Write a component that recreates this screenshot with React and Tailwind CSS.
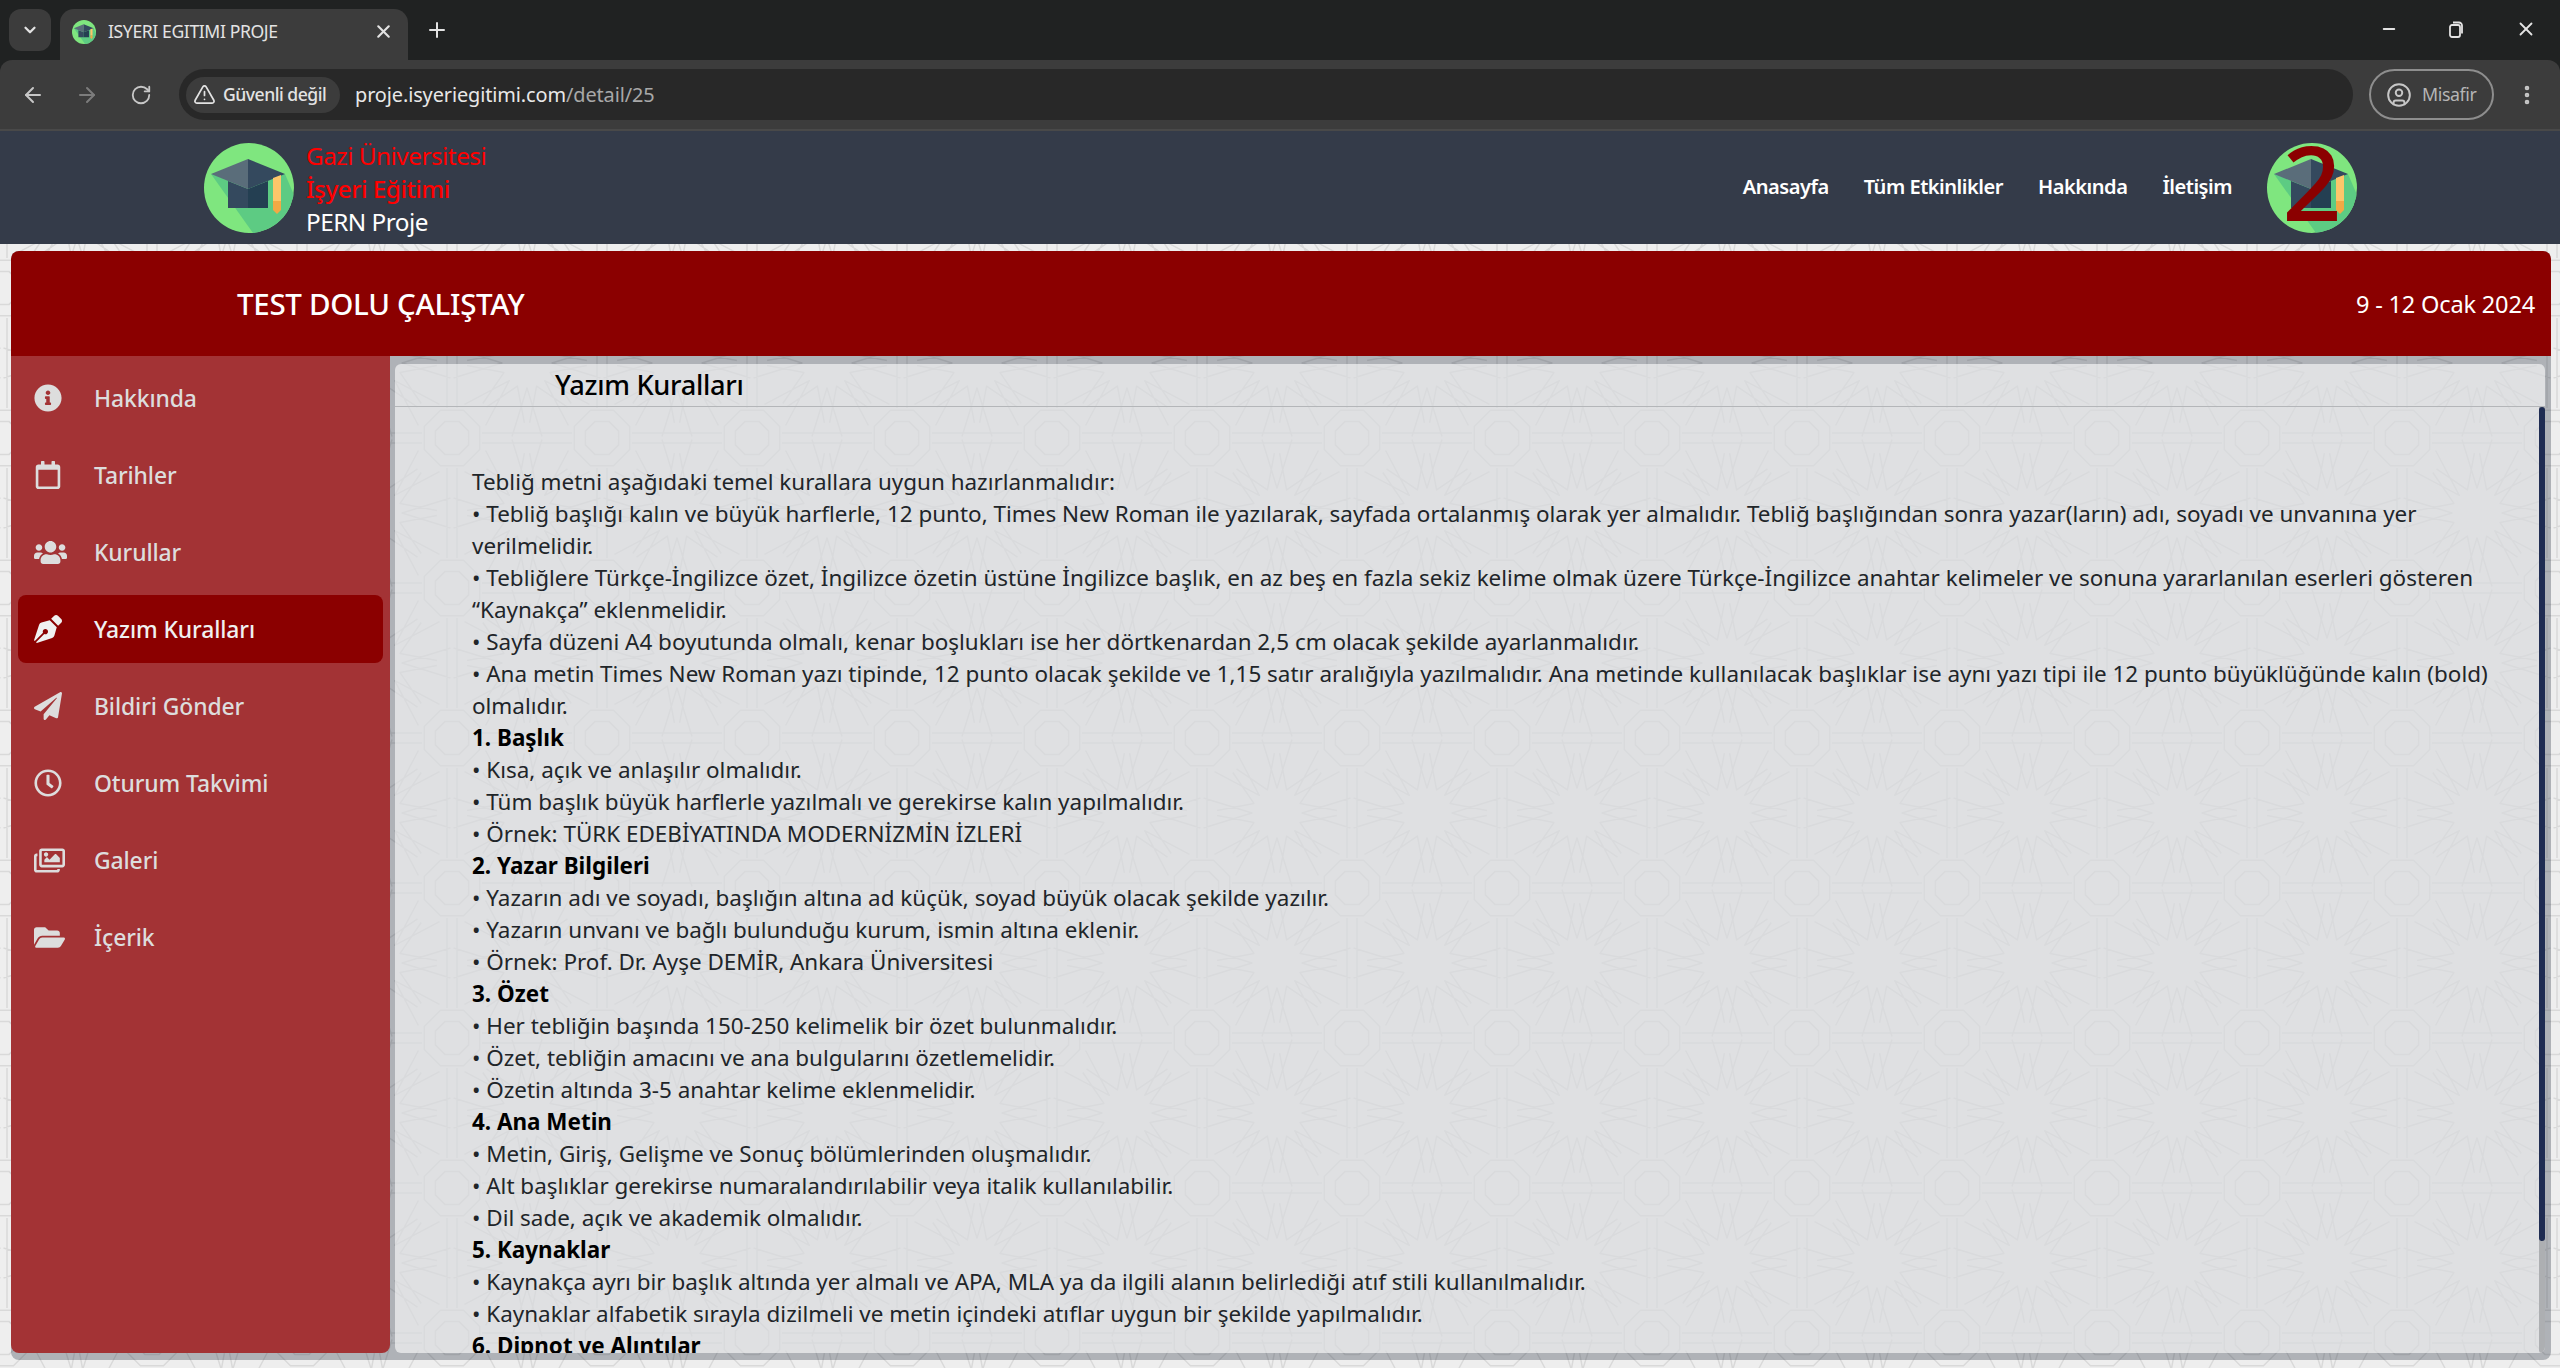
import React from 'react';
import { ArrowLeft, ArrowRight, RotateCw, TriangleAlert, CircleUser, X, Plus, Minus, ChevronDown, EllipsisVertical } from 'lucide-react';
import { FaInfoCircle, FaRegCalendar, FaUsers, FaPenNib, FaPaperPlane, FaRegClock, FaRegImages, FaFolderOpen } from 'react-icons/fa';

function polar(cx, cy, r, deg) {
  const a = (deg * Math.PI) / 180;
  return `${(cx + r * Math.cos(a)).toFixed(1)} ${(cy + r * Math.sin(a)).toFixed(1)}`;
}

function rosette(cx, cy) {
  let d = '';
  for (let k = 0; k < 16; k++) {
    const a = k * 22.5;
    const axis = k % 2 === 0;
    const r0 = 25;
    const r1 = axis ? 75 : 60;
    const da = axis ? 11.5 : 20;
    d += `M${polar(cx, cy, r1, a - da)} L${polar(cx, cy, r0, a)} L${polar(cx, cy, r1, a + da)} `;
  }
  return d;
}

function octagon(cx, cy, r) {
  let d = '';
  for (let k = 0; k < 8; k++) d += `${k === 0 ? 'M' : 'L'}${polar(cx, cy, r, 22.5 + k * 45)} `;
  return d + 'Z ';
}

const tilePath =
  rosette(0, 0) + rosette(150, 0) + rosette(0, 150) + rosette(150, 150) +
  octagon(75, 75, 18) + octagon(75, 75, 30) +
  'M0 70H45M0 80H45M105 70H150M105 80H150M70 0V45M80 0V45M70 105V150M80 105V150';

function Pattern() {
  return (
    <svg className="absolute inset-0 w-full h-full" aria-hidden="true">
      <defs>
        <pattern id="geo" width="150" height="150" patternUnits="userSpaceOnUse" patternTransform="translate(77 63)">
          <path d={tilePath} fill="none" stroke="#d9d9d9" strokeWidth="1.5" strokeLinejoin="round" />
        </pattern>
      </defs>
      <rect width="100%" height="100%" fill="url(#geo)" />
    </svg>
  );
}

function Logo({ id, className }) {
  return (
    <svg viewBox="0 0 90 90" className={className}>
      <defs>
        <clipPath id={id}>
          <circle cx="45" cy="45" r="45" />
        </clipPath>
      </defs>
      <circle cx="45" cy="45" r="45" fill="#7fe67f" />
      <g clipPath={`url(#${id})`}>
        <polygon points="7,31 49,90 90,90 90,52 81,31" fill="#5dcb83" />
      </g>
      <polygon points="24,38 44,46 44,65 24,65" fill="#34495e" />
      <polygon points="44,46 64,38 64,65 44,65" fill="#243f52" />
      <polygon points="7,31 44,16 44,46" fill="#5a6d7a" />
      <polygon points="44,16 81,31 44,46" fill="#34495e" />
      <polygon points="69,35 77,32 77,58 69,58" fill="#fdc66a" />
      <polygon points="69,58 77,58 77,67 73,71 69,67" fill="#f2a945" />
    </svg>
  );
}

const lines = [
  ['Tebliğ metni aşağıdaki temel kurallara uygun hazırlanmalıdır:'],
  ['• Tebliğ başlığı kalın ve büyük harflerle, 12 punto, Times New Roman ile yazılarak, sayfada ortalanmış olarak yer almalıdır. Tebliğ başlığından sonra yazar(ların) adı, soyadı ve unvanına yer'],
  ['verilmelidir.'],
  ['• Tebliğlere Türkçe-İngilizce özet, İngilizce özetin üstüne İngilizce başlık, en az beş en fazla sekiz kelime olmak üzere Türkçe-İngilizce anahtar kelimeler ve sonuna yararlanılan eserleri gösteren'],
  ['“Kaynakça” eklenmelidir.'],
  ['• Sayfa düzeni A4 boyutunda olmalı, kenar boşlukları ise her dörtkenardan 2,5 cm olacak şekilde ayarlanmalıdır.'],
  ['• Ana metin Times New Roman yazı tipinde, 12 punto olacak şekilde ve 1,15 satır aralığıyla yazılmalıdır. Ana metinde kullanılacak başlıklar ise aynı yazı tipi ile 12 punto büyüklüğünde kalın (bold)'],
  ['olmalıdır.'],
  ['1. Başlık', true],
  ['• Kısa, açık ve anlaşılır olmalıdır.'],
  ['• Tüm başlık büyük harflerle yazılmalı ve gerekirse kalın yapılmalıdır.'],
  ['• Örnek: TÜRK EDEBİYATINDA MODERNİZMİN İZLERİ'],
  ['2. Yazar Bilgileri', true],
  ['• Yazarın adı ve soyadı, başlığın altına ad küçük, soyad büyük olacak şekilde yazılır.'],
  ['• Yazarın unvanı ve bağlı bulunduğu kurum, ismin altına eklenir.'],
  ['• Örnek: Prof. Dr. Ayşe DEMİR, Ankara Üniversitesi'],
  ['3. Özet', true],
  ['• Her tebliğin başında 150-250 kelimelik bir özet bulunmalıdır.'],
  ['• Özet, tebliğin amacını ve ana bulgularını özetlemelidir.'],
  ['• Özetin altında 3-5 anahtar kelime eklenmelidir.'],
  ['4. Ana Metin', true],
  ['• Metin, Giriş, Gelişme ve Sonuç bölümlerinden oluşmalıdır.'],
  ['• Alt başlıklar gerekirse numaralandırılabilir veya italik kullanılabilir.'],
  ['• Dil sade, açık ve akademik olmalıdır.'],
  ['5. Kaynaklar', true],
  ['• Kaynakça ayrı bir başlık altında yer almalı ve APA, MLA ya da ilgili alanın belirlediği atıf stili kullanılmalıdır.'],
  ['• Kaynaklar alfabetik sırayla dizilmeli ve metin içindeki atıflar uygun bir şekilde yapılmalıdır.'],
  ['6. Dipnot ve Alıntılar', true],
];

const menu = [
  ['Hakkında', FaInfoCircle, 28],
  ['Tarihler', FaRegCalendar, 28],
  ['Kurullar', FaUsers, 33],
  ['Yazım Kuralları', FaPenNib, 28, true],
  ['Bildiri Gönder', FaPaperPlane, 28],
  ['Oturum Takvimi', FaRegClock, 28],
  ['Galeri', FaRegImages, 31],
  ['İçerik', FaFolderOpen, 31],
];

export default function App() {
  return (
    <div className="relative w-full h-[1368px] overflow-hidden bg-[#eeeeee] font-['Noto_Sans',sans-serif] flex flex-col">
      <Pattern />

      {/* tab strip */}
      <div className="relative h-[60px] shrink-0 bg-[#202222] flex items-end pl-[9px] text-[#e3e3e3]">
        <div className="w-[42px] h-[42px] mb-[9px] rounded-[12px] bg-[#3c3c3c] flex items-center justify-center">
          <ChevronDown size={18} strokeWidth={3} />
        </div>
        <div className="ml-[9px] w-[348px] h-[51px] rounded-t-[14px] bg-[#3c3c3c] flex items-center pl-[12px] pr-[14px] pb-[6px]">
          <Logo id="fav" className="w-[24px] h-[24px] shrink-0" />
          <span className="ml-[12px] text-[17.6px] tracking-[-0.4px] whitespace-nowrap">ISYERI EGITIMI PROJE</span>
          <X size={21} strokeWidth={2.4} className="ml-auto" />
        </div>
        <Plus size={24} strokeWidth={2} className="ml-[17px] mb-[18px]" />
        <div className="ml-auto flex items-center h-[60px] pb-[3px] pr-[23px] gap-[50px]">
          <Minus size={18} strokeWidth={2.6} />
          <svg width="17" height="18" viewBox="0 0 17 18" fill="none" stroke="#e3e3e3" strokeWidth="1.8">
            <rect x="2" y="5" width="10" height="12" rx="2" />
            <path d="M5 2.5h6a3 3 0 0 1 3 3v8" />
          </svg>
          <X size={22} strokeWidth={2} />
        </div>
      </div>

      {/* toolbar */}
      <div className="relative h-[71px] shrink-0 bg-[#202222]">
        <div className="h-full rounded-t-[12px] bg-[#3c3c3c] border-b-[2px] border-[#494949] flex items-center text-[#c7c7c7]">
          <ArrowLeft size={24} strokeWidth={2} className="ml-[21px]" />
          <ArrowRight size={24} strokeWidth={2} className="ml-[30px] text-[#7c7c7c]" />
          <RotateCw size={22} strokeWidth={2} className="ml-[31px]" />
          <div className="ml-[27px] w-[2174px] h-[51px] rounded-full bg-[#282828] flex items-center pl-[7px]">
            <div className="h-[36px] w-[154px] rounded-full bg-[#3c3c3c] flex items-center pl-[7px] text-[#e3e3e3]">
              <TriangleAlert size={23} strokeWidth={1.8} />
              <span className="ml-[7px] text-[17.6px] font-medium tracking-[-0.5px] whitespace-nowrap">Güvenli değil</span>
            </div>
            <span className="ml-[15px] text-[19.9px] tracking-[-0.1px] whitespace-nowrap text-[#e8e8e8]">
              proje.isyeriegitimi.com<span className="text-[#a8a8a8]">/detail/25</span>
            </span>
          </div>
          <div className="ml-[16px] w-[125px] h-[51px] rounded-full border-[2px] border-[#8e8e8e] flex items-center pl-[15px]">
            <CircleUser size={26} strokeWidth={1.8} />
            <span className="ml-[10px] text-[17.8px] tracking-[-0.4px] text-[#b5b5b5]">Misafir</span>
          </div>
          <EllipsisVertical size={24} strokeWidth={2.6} className="ml-[21px]" />
        </div>
      </div>

      {/* site header */}
      <header className="relative h-[113px] shrink-0 bg-[#343b49] flex items-center pl-[204px] pr-[203px]">
        <Logo id="brand" className="w-[90px] h-[90px] shrink-0" />
        <div className="ml-[12px] pt-[2px] text-[24.3px] leading-[33px] tracking-[-0.5px] whitespace-nowrap">
          <div className="text-[#ff0000]">Gazi Üniversitesi</div>
          <div className="text-[#ff0000] font-medium">İşyeri Eğitimi</div>
          <div className="text-white">PERN Proje</div>
        </div>
        <nav className="ml-auto flex items-center gap-[35px] text-[20.1px] font-semibold tracking-[-0.5px] text-white whitespace-nowrap">
          <span>Anasayfa</span>
          <span>Tüm Etkinlikler</span>
          <span>Hakkında</span>
          <span>İletişim</span>
        </nav>
        <div className="relative ml-[35px] w-[90px] h-[90px] shrink-0">
          <Logo id="brand2" className="w-[90px] h-[90px]" />
          <span className="absolute inset-0 pb-[14px] flex items-center justify-center text-[104px] leading-none font-medium text-[#8b0000]">2</span>
        </div>
      </header>

      {/* event area */}
      <main className="relative mt-[7px] ml-[11px] mr-[9px] h-[1109px] shrink-0 rounded-[8px] bg-[#1f2937]/30 flex flex-col">
        <div className="h-[105px] shrink-0 rounded-t-[8px] bg-[#8b0000] flex items-center justify-between pl-[226px] pr-[16px] pt-[2px] text-white">
          <h1 className="text-[29.5px] font-medium tracking-[-0.3px]">TEST DOLU ÇALIŞTAY</h1>
          <div className="text-[23.6px] tracking-[-0.2px]">9 - 12 Ocak 2024</div>
        </div>
        <div className="flex-1 min-h-0 flex">
          <aside className="w-[379px] shrink-0 mb-[7px] rounded-b-[8px] bg-[#a33335] pt-[8px] px-[7px] flex flex-col gap-[9px]">
            {menu.map(([label, Icon, size, active]) => (
              <div
                key={label}
                className={active
                  ? 'h-[68px] shrink-0 rounded-[8px] bg-[#8b0000] flex items-center pl-[16px] text-[#f0f0f0]'
                  : 'h-[68px] shrink-0 rounded-[8px] flex items-center pl-[16px] text-[#dddddd]'}
              >
                <span className="w-[60px] shrink-0 flex">
                  <Icon size={size} />
                </span>
                <span className="pt-[2px] text-[22.9px] font-medium tracking-[-0.1px] whitespace-nowrap">{label}</span>
              </div>
            ))}
          </aside>
          <section className="relative flex-1 min-w-0 ml-[5px] mt-[8px] mb-[7px] mr-[6px] rounded-[6px] bg-white/60 overflow-hidden flex flex-col">
            <div className="h-[43px] shrink-0 border-b border-[#b4b6b9] pl-[160px] flex items-center">
              <h2 className="text-[27.2px] font-medium tracking-[-0.3px] text-black">Yazım Kuralları</h2>
            </div>
            <div className="relative flex-1 min-h-0 overflow-hidden pl-[77px] pt-[59px] text-[22.45px] leading-[32px] text-[#212529] whitespace-nowrap">
              {lines.map(([text, bold], i) => (
                <div key={i} className={bold ? 'font-bold text-black' : ''}>{text}</div>
              ))}
              <div className="absolute right-0 top-0 bottom-0 w-[6px] rounded-b-[3px] bg-[#adafb2]">
                <div className="h-[834px] rounded-full bg-[#1f2c52]" />
              </div>
            </div>
          </section>
        </div>
      </main>
    </div>
  );
}
